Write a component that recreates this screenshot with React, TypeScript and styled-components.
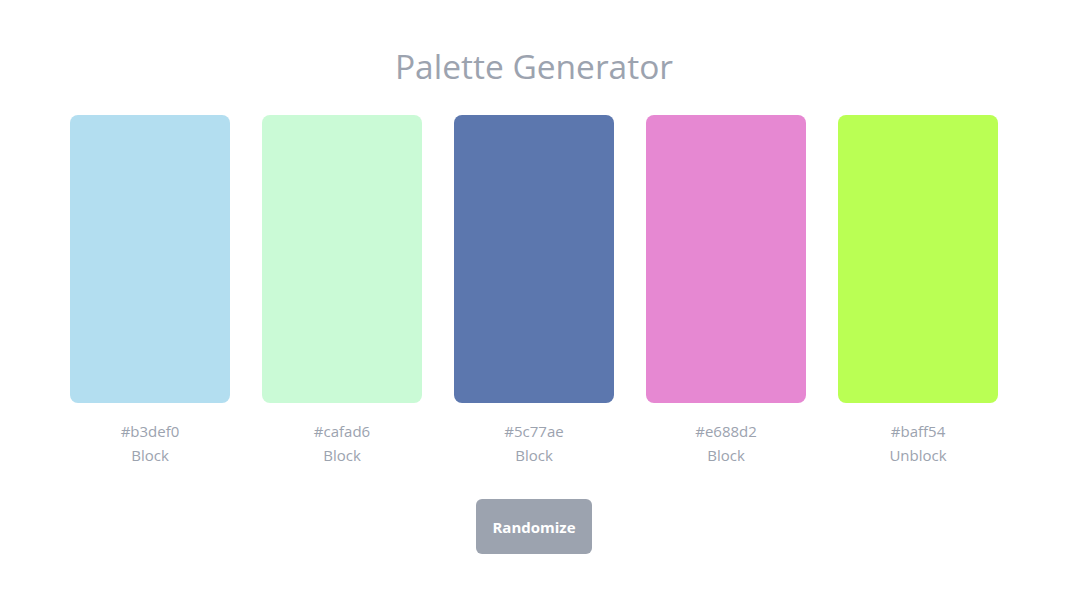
import styled, { createGlobalStyle } from "styled-components";

const GlobalStyle = createGlobalStyle`
  body {
    margin: 0;
    background: #ffffff;
    font-family: "Open Sans", "Noto Sans", sans-serif;
  }
`;

const Page = styled.div`
  display: flex;
  flex-direction: column;
  align-items: center;
  padding: 42px 5px 0 0;
`;

const Title = styled.h1`
  margin: 0;
  font-size: 33.5px;
  font-weight: 400;
  line-height: 48px;
  color: #9ca3af;
`;

const Swatches = styled.div`
  display: flex;
  gap: 32px;
  margin-top: 25px;
`;

const Swatch = styled.div`
  display: flex;
  flex-direction: column;
  align-items: center;
  width: 160px;
`;

const ColorBlock = styled.div<{ $color: string }>`
  width: 160px;
  height: 288px;
  border-radius: 8px;
  background: ${(p) => p.$color};
`;

const Hex = styled.span`
  margin-top: 16px;
  font-size: 15px;
  line-height: 24px;
  color: #9ca3af;
`;

const Toggle = styled.button`
  border: none;
  background: none;
  padding: 0;
  font-family: inherit;
  font-size: 15px;
  line-height: 24px;
  color: #9ca3af;
  cursor: pointer;
`;

const RandomizeButton = styled.button`
  margin-top: 32px;
  width: 116px;
  height: 55px;
  border: none;
  border-radius: 6px;
  background: #9ca3af;
  color: #ffffff;
  font-family: inherit;
  font-size: 15px;
  font-weight: 700;
  cursor: pointer;
`;

const colors = [
  { hex: "#b3def0", locked: false },
  { hex: "#cafad6", locked: false },
  { hex: "#5c77ae", locked: false },
  { hex: "#e688d2", locked: false },
  { hex: "#baff54", locked: true },
];

export default function App() {
  return (
    <>
      <GlobalStyle />
      <Page>
        <Title>Palette Generator</Title>
        <Swatches>
          {colors.map((c) => (
            <Swatch key={c.hex}>
              <ColorBlock $color={c.hex} />
              <Hex>{c.hex}</Hex>
              <Toggle>{c.locked ? "Unblock" : "Block"}</Toggle>
            </Swatch>
          ))}
        </Swatches>
        <RandomizeButton>Randomize</RandomizeButton>
      </Page>
    </>
  );
}
